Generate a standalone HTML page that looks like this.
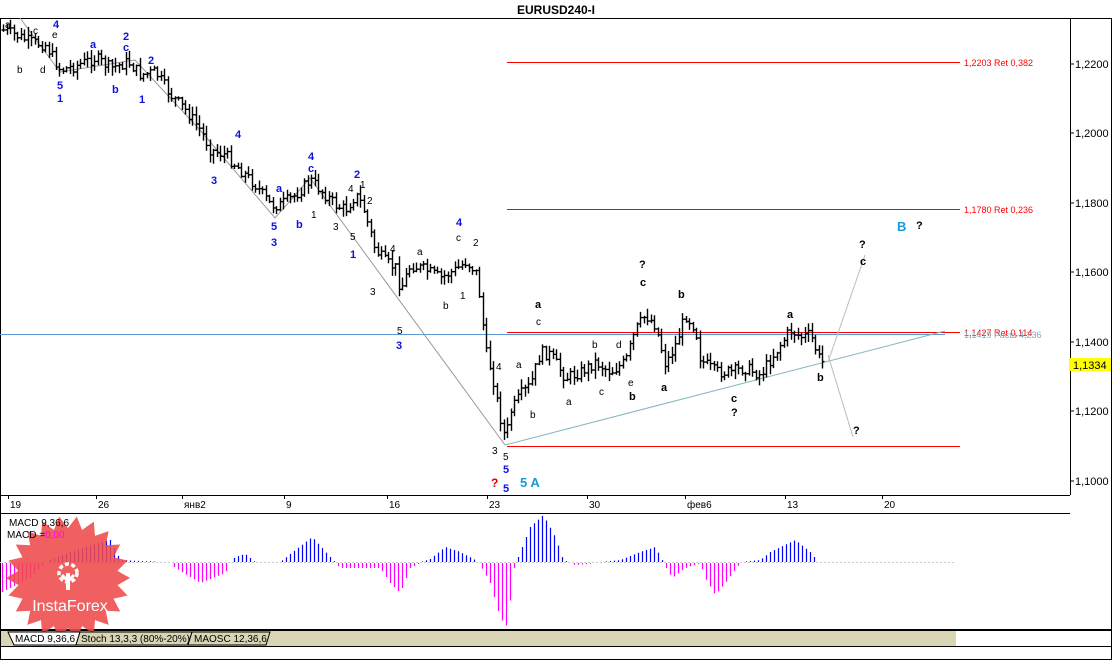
<!DOCTYPE html>
<html><head><meta charset="utf-8">
<style>
html,body{margin:0;padding:0;background:#fff;}
svg{display:block;font-family:"Liberation Sans",sans-serif;}
</style></head><body>
<svg id="s" width="1113" height="661" xmlns="http://www.w3.org/2000/svg">
<rect width="1113" height="661" fill="#fff"/>
<text x="556" y="14" font-size="12" font-weight="bold" text-anchor="middle">EURUSD240-I</text>
<rect x="0.5" y="18.5" width="1111" height="641" fill="none" stroke="#000"/>
<line x1="0" y1="495.5" x2="1070" y2="495.5" stroke="#000"/>
<line x1="0" y1="513.5" x2="1070" y2="513.5" stroke="#000"/>
<line x1="1070.5" y1="18" x2="1070.5" y2="495" stroke="#000"/>
<line x1="0" y1="630" x2="1112" y2="630" stroke="#000" stroke-width="2"/>
<rect x="1" y="631" width="955" height="15" fill="#d8d4b4"/>
<line x1="1" y1="646.5" x2="1112" y2="646.5" stroke="#000"/>
<g font-size="11" fill="#000">
<line x1="1070" y1="64" x2="1074" y2="64" stroke="#000"/><text x="1075" y="68">1,2200</text>
<line x1="1070" y1="133" x2="1074" y2="133" stroke="#000"/><text x="1075" y="137">1,2000</text>
<line x1="1070" y1="203" x2="1074" y2="203" stroke="#000"/><text x="1075" y="207">1,1800</text>
<line x1="1070" y1="272" x2="1074" y2="272" stroke="#000"/><text x="1075" y="276">1,1600</text>
<line x1="1070" y1="342" x2="1074" y2="342" stroke="#000"/><text x="1075" y="346">1,1400</text>
<rect x="1069" y="358" width="42" height="13" fill="#ffff00"/><text x="1073" y="369">1,1334</text>
<line x1="1070" y1="411" x2="1074" y2="411" stroke="#000"/><text x="1075" y="415">1,1200</text>
<line x1="1070" y1="481" x2="1074" y2="481" stroke="#000"/><text x="1075" y="485">1,1000</text>
</g>
<g font-size="10" fill="#000" stroke="#000">
<line x1="8.5" y1="495" x2="8.5" y2="499"/><line x1="96.5" y1="495" x2="96.5" y2="499"/><line x1="182.5" y1="495" x2="182.5" y2="499"/><line x1="284.5" y1="495" x2="284.5" y2="499"/><line x1="387.5" y1="495" x2="387.5" y2="499"/><line x1="487.5" y1="495" x2="487.5" y2="499"/><line x1="587.5" y1="495" x2="587.5" y2="499"/><line x1="685.5" y1="495" x2="685.5" y2="499"/><line x1="785.5" y1="495" x2="785.5" y2="499"/><line x1="882.5" y1="495" x2="882.5" y2="499"/>
</g>
<g font-size="10" fill="#000">
<text x="10" y="508">19</text><text x="98" y="508">26</text><text x="184" y="508">янв2</text><text x="286" y="508">9</text><text x="389" y="508">16</text><text x="489" y="508">23</text><text x="589" y="508">30</text><text x="687" y="508">фев6</text><text x="787" y="508">13</text><text x="884" y="508">20</text>
</g>
<g stroke="#ff0000" stroke-width="1">
<line x1="507" y1="62.5" x2="960" y2="62.5"/>
<line x1="507" y1="209.5" x2="960" y2="209.5"/>
<line x1="507" y1="332.5" x2="960" y2="332.5"/>
<line x1="507" y1="446.5" x2="960" y2="446.5"/>
</g>
<line x1="0" y1="334.5" x2="945" y2="334.5" stroke="#5b9bd5"/>
<line x1="505" y1="445" x2="945" y2="331" stroke="#7fb7bd"/>
<polyline points="20,18 60,72 135,60 200,130 275,218 310,178 505,445" fill="none" stroke="#999"/>
<polyline points="828,362 865,255" fill="none" stroke="#bbb"/>
<polyline points="828,355 853,437" fill="none" stroke="#bbb"/>
<g font-size="9" fill="#ff0000"><text x="964" y="66">1,2203 Ret 0,382</text><text x="964" y="213">1,1780 Ret 0,236</text><text x="964" y="336">1,1427 Ret 0,114</text></g>
<text x="964" y="338" font-size="9" fill="#8ab">1,1419 Расш 4,236</text>
<g id="bars" stroke="#000" stroke-width="1.4"></g>
<g font-size="11" font-weight="bold" fill="#1010e0">
<text x="53" y="28">4</text><text x="57" y="89">5</text><text x="57" y="102">1</text>
<text x="123" y="40">2</text><text x="123" y="51">c</text><text x="90" y="48">a</text><text x="112" y="93">b</text><text x="148" y="64">2</text><text x="139" y="103">1</text>
<text x="235" y="138">4</text><text x="211" y="184">3</text><text x="308" y="160">4</text><text x="308" y="172">c</text><text x="276" y="192">a</text><text x="271" y="230">5</text><text x="271" y="246">3</text><text x="296" y="228">b</text>
<text x="354" y="178">2</text><text x="350" y="258">1</text><text x="456" y="226">4</text><text x="396" y="349">3</text>
<text x="503" y="473">5</text><text x="503" y="492">5</text>
</g>
<g font-size="10" fill="#000">
<text x="5" y="28">a</text><text x="33" y="34">c</text><text x="52" y="38">e</text><text x="17" y="73">b</text><text x="40" y="73">d</text>
<text x="311" y="218">1</text><text x="333" y="230">3</text><text x="348" y="192">4</text><text x="360" y="188">1</text><text x="367" y="204">2</text><text x="350" y="240">5</text>
<text x="390" y="252">4</text><text x="370" y="295">3</text><text x="397" y="334">5</text><text x="417" y="255">a</text><text x="443" y="309">b</text><text x="460" y="299">1</text><text x="456" y="241">c</text><text x="473" y="246">2</text>
<text x="496" y="370">4</text><text x="492" y="454">3</text><text x="503" y="460">5</text>
<text x="516" y="368">a</text><text x="530" y="418">b</text><text x="536" y="325">c</text><text x="566" y="405">a</text><text x="592" y="348">b</text><text x="599" y="395">c</text><text x="616" y="348">d</text><text x="628" y="386">e</text>
</g>
<g font-size="11" font-weight="bold" fill="#000">
<text x="535" y="308">a</text><text x="639" y="268">?</text><text x="640" y="286">c</text><text x="629" y="400">b</text><text x="678" y="298">b</text><text x="661" y="391">a</text>
<text x="787" y="318">a</text><text x="731" y="402">c</text><text x="731" y="416">?</text><text x="817" y="381">b</text><text x="859" y="248">?</text><text x="860" y="265">c</text><text x="853" y="434">?</text><text x="916" y="229">?</text>
</g>
<text x="491" y="487" font-size="12" font-weight="bold" fill="#e00000">?</text>
<text x="520" y="487" font-size="13" font-weight="bold" fill="#1a9ad6">5  A</text>
<text x="897" y="231" font-size="13" font-weight="bold" fill="#1a9ad6">B</text>
<line x1="0" y1="562.5" x2="956" y2="562.5" stroke="#ccc" stroke-dasharray="2,2"/>
<g id="macd" stroke-width="1.2"></g>
<polygon id="star" fill="#ef4a4a" opacity="0.88"/>
<g transform="translate(68,577)" fill="#fff">
<circle cx="0" cy="-4" r="9" fill="none" stroke="#fff" stroke-width="3.5" stroke-dasharray="4,2.5"/>
<rect x="-2" y="-4" width="4" height="17"/>
<path d="M-6,-2 L0,4 L6,-2" fill="none" stroke="#fff" stroke-width="3"/>
</g>
<text x="70" y="611" font-size="16" fill="#fff" text-anchor="middle">InstaForex</text>
<text x="9" y="526" font-size="10" fill="#000">MACD 9,36,6</text>
<text x="7" y="538" font-size="10" fill="#000">MACD =<tspan fill="#ff00ff">0,00</tspan></text>
<path d="M8,632 L14,645 L76,645 L80,632 Z" fill="#fff" stroke="#000"/>
<path d="M80,632 L76,645 L188,645 L192,632 Z" fill="#d8d4b4" stroke="#000"/>
<path d="M192,632 L188,645 L266,645 L270,632 Z" fill="#d8d4b4" stroke="#000"/>
<g font-size="10" fill="#000"><text x="15" y="642">MACD 9,36,6</text><text x="81" y="642">Stoch 13,3,3 (80%-20%)</text><text x="194" y="642">MAOSC 12,36,6</text></g>
</svg>
<script>
var NS="http://www.w3.org/2000/svg";
var pts=[[3,30],[15,35],[30,42],[45,45],[60,70],[75,66],[95,58],[110,68],[128,62],[140,75],[155,72],[170,95],[185,110],[200,130],[210,150],[225,155],[240,170],[255,185],[270,205],[280,205],[295,195],[310,180],[320,190],[335,205],[345,210],[355,195],[362,205],[375,250],[385,262],[395,268],[400,290],[410,265],[425,270],[440,278],[455,270],[465,262],[475,270],[480,300],[485,350],[492,375],[498,410],[505,440],[510,412],[520,395],[530,385],[540,352],[550,355],[565,378],[580,372],[595,362],[610,372],[625,362],[635,330],[645,315],[655,325],[665,365],[675,345],[685,315],[695,328],[700,360],[715,372],[730,372],[745,368],[760,375],[775,352],[790,330],[800,337],[810,335],[820,362]];
function yAt(x){for(var i=1;i<pts.length;i++){if(x<=pts[i][0]){var a=pts[i-1],b=pts[i];return a[1]+(b[1]-a[1])*(x-a[0])/(b[0]-a[0]);}}return pts[pts.length-1][1];}
var g=document.getElementById("bars"),seed=7;function r(){seed=(seed*9301+49297)%233280;return seed/233280;}
var d="",prev=yAt(3);
for(var x=3;x<=822;x+=3.5){var c=yAt(x)+(r()-0.5)*12;var o=prev;var hi=Math.min(o,c)-r()*8-1,lo=Math.max(o,c)+r()*8+1;var X=Math.round(x)+0.5;
d+="M"+X+","+hi.toFixed(1)+"V"+lo.toFixed(1)+"M"+(X-2)+","+o.toFixed(1)+"H"+X+"M"+X+","+c.toFixed(1)+"H"+(X+2);prev=c;}
var p=document.createElementNS(NS,"path");p.setAttribute("d",d);p.setAttribute("fill","none");g.appendChild(p);
var m=[[0,-30],[30,-15],[45,0],[70,10],[100,20],[110,22],[120,2],[140,1],[170,0],[175,-5],[200,-20],[225,-10],[230,0],[235,5],[245,8],[255,0],[280,0],[290,8],[312,25],[330,5],[340,-5],[380,-5],[390,-20],[400,-30],[410,-5],[420,0],[430,3],[445,15],[460,10],[475,2],[480,-2],[490,-20],[500,-55],[508,-65],[512,-10],[518,5],[530,35],[543,47],[555,25],[563,2],[575,-2],[600,0],[620,2],[640,10],[655,15],[663,0],[672,-15],[685,-5],[700,0],[705,-15],[715,-32],[725,-20],[740,0],[760,2],[770,10],[795,22],[810,10],[818,0],[821,-10]];
function mA(x){for(var i=1;i<m.length;i++){if(x<=m[i][0]){var a=m[i-1],b=m[i];return a[1]+(b[1]-a[1])*(x-a[0])/(b[0]-a[0]);}}return 0;}
var db="",dm="";for(var x=2;x<=822;x+=4){var v=mA(x);var X=x+0.5;if(v>=0.5)db+="M"+X+",562V"+(562-v).toFixed(1);else if(v<=-0.5)dm+="M"+X+",563V"+(563-v).toFixed(1);}
var mg=document.getElementById("macd");
var p1=document.createElementNS(NS,"path");p1.setAttribute("d",db);p1.setAttribute("stroke","#0000ff");mg.appendChild(p1);
var p2=document.createElementNS(NS,"path");p2.setAttribute("d",dm);p2.setAttribute("stroke","#ff00ff");mg.appendChild(p2);
var s="",cx=68,cy=578,n=22;for(var i=0;i<n*2;i++){var rr=i%2?50:62;var a=Math.PI*i/n;s+=(cx+rr*Math.cos(a)).toFixed(1)+","+(cy+rr*Math.sin(a)).toFixed(1)+" ";}
document.getElementById("star").setAttribute("points",s);
</script>
</body></html>
